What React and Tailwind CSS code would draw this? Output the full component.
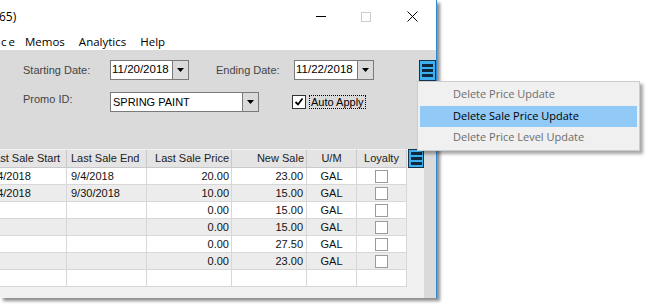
import React from "react";

function Arrow() {
  return (
    <svg width="8" height="5" viewBox="0 0 8 5">
      <path d="M0 0 H7 L3.5 4 Z" fill="#000" />
    </svg>
  );
}

function Combo({ wrap, text, textCls }) {
  return (
    <div className={"flex h-[20px] border border-[#7a7a7a] " + wrap}>
      <div className={"flex-1 bg-white flex items-center pl-[1px] text-black " + textCls}>{text}</div>
      <div className="w-[16px] border-l border-[#7a7a7a] bg-[#dadada] flex items-center justify-center">
        <Arrow />
      </div>
    </div>
  );
}

function Burger({ cls }) {
  return (
    <div className={"bg-[#3db1ef] border border-[#17324a] flex flex-col justify-center items-center gap-[2px] " + cls}>
      <div className="w-[11px] h-[3px] bg-[#0e2a40]" />
      <div className="w-[11px] h-[3px] bg-[#0e2a40]" />
      <div className="w-[11px] h-[3px] bg-[#0e2a40]" />
    </div>
  );
}

const rows = [
  ["9/4/2018", "9/4/2018", "20.00", "23.00", "GAL"],
  ["9/4/2018", "9/30/2018", "10.00", "15.00", "GAL"],
  ["", "", "0.00", "15.00", "GAL"],
  ["", "", "0.00", "15.00", "GAL"],
  ["", "", "0.00", "27.50", "GAL"],
  ["", "", "0.00", "23.00", "GAL"],
  null,
];

export default function App() {
  return (
    <div className="relative w-[647px] h-[307px] bg-white overflow-hidden font-['Liberation_Sans',Arial,sans-serif]">
      <div className="w-[437px] h-[298px] flex flex-col border-r border-[#2a8ad8] shadow-[3px_3px_3px_rgba(0,0,0,0.45)] bg-white">
        {/* title bar */}
        <div className="h-[30px] flex items-center pt-[3px] font-['Open_Sans',sans-serif] text-[12px] text-black">
          <span className="ml-[-1px]">65)</span>
          <div className="ml-auto flex items-center">
            <div className="w-[10px] h-[1px] bg-black mr-[35px]" />
            <div className="w-[10px] h-[10px] border border-[#cccccc] mr-[36px]" />
            <svg width="11" height="11" viewBox="0 0 11 11" className="mr-[18px]">
              <path d="M0.5 0.5 L10.5 10.5 M10.5 0.5 L0.5 10.5" stroke="#000" strokeWidth="1" />
            </svg>
          </div>
        </div>
        {/* menu bar */}
        <div className="h-[20px] flex items-center pt-[3px] font-['Open_Sans',sans-serif] text-[11.5px] text-black">
          <span className="w-[25px] pl-[1px] tracking-[2px]">ce</span>
          <span>Memos</span>
          <span className="ml-[14px]">Analytics</span>
          <span className="ml-[14px]">Help</span>
        </div>
        {/* body */}
        <div className="flex-1 flex flex-col bg-[#dadada]">
          <div className="h-[99px] pt-[10px] flex flex-col">
            <div className="flex items-start h-[21px]">
              <div className="w-[110px] pl-[23px] h-[20px] flex items-center text-[11px] text-[#444]">Starting Date:</div>
              <Combo wrap="w-[79px]" text="11/20/2018" textCls="text-[11.5px]" />
              <div className="ml-[27px] w-[78px] h-[20px] flex items-center text-[11px] text-[#444]">Ending Date:</div>
              <Combo wrap="w-[80px]" text="11/22/2018" textCls="text-[11.5px]" />
              <Burger cls="ml-[45px] w-[17px] h-[21px]" />
            </div>
            <div className="flex items-center mt-[11px] h-[20px]">
              <div className="w-[110px] pl-[23px] h-[20px] flex items-center pb-[5px] text-[11px] text-[#444]">Promo ID:</div>
              <Combo wrap="w-[149px]" text="SPRING PAINT" textCls="text-[11px] pl-[2px]" />
              <div className="ml-[33px] w-[14px] h-[14px] border border-[#333] bg-white flex items-center justify-center">
                <svg width="10" height="10" viewBox="0 0 10 10">
                  <path d="M1.5 5 L4 7.5 L8.5 1.5" stroke="#000" strokeWidth="1.8" fill="none" />
                </svg>
              </div>
              <div className="ml-[3px] h-[14px] px-[1px] border border-dotted border-black flex items-center text-[11px] text-black">Auto Apply</div>
            </div>
          </div>
          <div className="flex-1 flex">
            <div className="w-[424px] bg-[#f0f0f0] flex items-start overflow-hidden">
              <div className="ml-[-16px] grid grid-cols-[83px_80px_85px_75px_50px_50px] text-[11px] text-[#111] shrink-0">
                {["Last Sale Start", "Last Sale End", "Last Sale Price", "New Sale", "U/M", "Loyalty"].map((h, i) => (
                  <div
                    key={h}
                    className={
                      "h-[19px] bg-[#e4e4e4] border-t border-t-[#f4f4f4] border-r border-b border-[#c9c9c9] flex items-center text-[#222] " +
                      (i < 2 ? "pl-[4px]" : i < 4 ? "justify-end pr-[2px]" : "justify-center")
                    }
                  >
                    {h}
                  </div>
                ))}
                {rows.map((r, ri) => {
                  const bg = ri % 2 === 1 ? "bg-[#ececec]" : "bg-white";
                  const base = "h-[17px] border-r border-b border-[#d7d7d7] flex items-center " + bg;
                  return (
                    <React.Fragment key={ri}>
                      <div className={base + " pl-[4px]"}>{r ? r[0] : ""}</div>
                      <div className={base + " pl-[4px]"}>{r ? r[1] : ""}</div>
                      <div className={base + " justify-end pr-[2px]"}>{r ? r[2] : ""}</div>
                      <div className={base + " justify-end pr-[3px]"}>{r ? r[3] : ""}</div>
                      <div className={base + " justify-center"}>{r ? r[4] : ""}</div>
                      <div className={base + " justify-center"}>
                        {r ? <div className="w-[13px] h-[13px] bg-white border border-[#9a9a9a]" /> : null}
                      </div>
                    </React.Fragment>
                  );
                })}
              </div>
              <Burger cls="ml-[1px] w-[16px] h-[19px] shrink-0" />
            </div>
          </div>
        </div>
      </div>
      {/* context menu */}
      <div className="absolute left-[417px] top-[81px] w-[223px] h-[70px] bg-[#f0f0f0] border border-[#cccccc] shadow-[3px_3px_3px_rgba(0,0,0,0.35)] pt-[2px] px-[2px] font-['Open_Sans',sans-serif] text-[11px]">
        <div className="h-[22px] flex items-center pl-[33px] pb-[2px] text-[#6d6d6d]">Delete Price Update</div>
        <div className="h-[21px] flex items-center pl-[33px] text-black bg-[#91c9f7]">Delete Sale Price Update</div>
        <div className="h-[21px] flex items-center pl-[33px] text-[#6d6d6d]">Delete Price Level Update</div>
      </div>
    </div>
  );
}
